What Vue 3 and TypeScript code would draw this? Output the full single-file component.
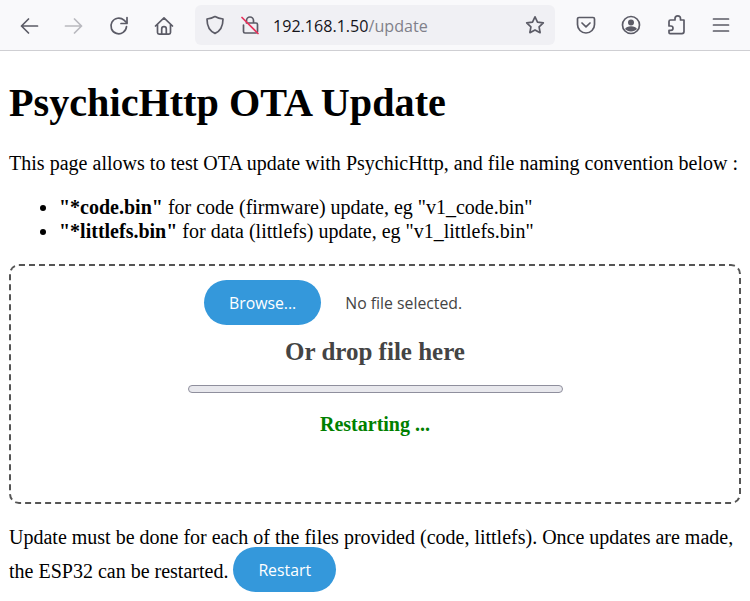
<script setup lang="ts">
const rules: { name: string; text: string }[] = [
  { name: '"*code.bin"', text: ' for code (firmware) update, eg "v1_code.bin"' },
  { name: '"*littlefs.bin"', text: ' for data (littlefs) update, eg "v1_littlefs.bin"' },
]
</script>

<template>
  <div class="window">
    <header class="toolbar">
      <nav class="group nav">
        <svg class="icon" viewBox="0 0 20 20"><path d="M18.500 10H2.500M9.500 3 2.500 10l7 7" /></svg>
        <svg class="icon faint" viewBox="0 0 20 20"><path d="M1.500 10h16M10.500 3l7 7-7 7" /></svg>
        <svg class="icon" viewBox="0 0 20 20"><path d="M17.500 10.500A7.800 7.800 0 1 1 15 4.200L17.600 6.600" /><path d="M18 1.500v6h-6" /></svg>
        <svg class="icon" viewBox="0 0 20 20"><path d="M1.500 10 10 1.800 18.500 10M3.500 8.500v8a1.600 1.600 0 0 0 1.600 1.600h9.800a1.600 1.600 0 0 0 1.600-1.600v-8" /><path d="M7.700 18v-5a2.300 2.300 0 0 1 4.600 0v5" /></svg>
      </nav>
      <div class="urlbar">
        <svg class="icon" viewBox="0 0 20 20"><path d="M10 1.600c2.500 1.400 5 2.100 8 2.400 0 7-2 11.800-8 14.400C4 15.800 2 11 2 4c3-.3 5.500-1 8-2.400z" /></svg>
        <svg class="icon lock" viewBox="0 0 20 20">
          <path d="M6.500 8V5.500a3.500 3.500 0 0 1 7 0V8M3.500 10v6.500a1.500 1.500 0 0 0 1.500 1.500h11a1.500 1.500 0 0 0 1.500-1.500V9.500A1.500 1.500 0 0 0 16 8H6.500" />
          <path class="slash" d="M2 2.500 18 18.500" />
        </svg>
        <span class="address">192.168.1.50<span class="path">/update</span></span>
        <svg class="icon star" viewBox="0 0 20 20"><path d="M10 1.800l2.500 5.300 5.800.8-4.200 4 1 5.800-5.100-2.800-5.100 2.800 1-5.800-4.200-4 5.800-.8z" /></svg>
      </div>
      <div class="group tools">
        <svg class="icon" viewBox="0 0 20 20"><path d="M3 2.500h14a1.500 1.500 0 0 1 1.500 1.500v5.500a8.500 8.500 0 0 1-17 0V4A1.500 1.500 0 0 1 3 2.500z" /><path d="M6 8l4 3.800L14 8" /></svg>
        <svg class="icon" viewBox="0 0 20 20"><circle cx="10" cy="10" r="8.500" /><circle class="fill" cx="10" cy="7.500" r="3" /><path class="fill" d="M4 14c1-2 3.200-2.800 6-2.800s5 .8 6 2.800c-1.500 1.600-3.500 2.500-6 2.500S5.500 15.600 4 14z" /></svg>
        <svg class="icon" viewBox="0 0 20 20"><path d="M8 5H3.500A1.500 1.500 0 0 0 2 6.500V11h1.800a2.200 2.200 0 0 1 0 4.400H2v2.200c0 .6.400 1 1 1h12a2 2 0 0 0 2-2V5h-3.500V3.700a2.700 2.700 0 0 0-5.500 0V5z" transform="translate(1 0)" /></svg>
        <svg class="icon" viewBox="0 0 20 20"><path d="M2.500 4h15M2.500 10h15M2.500 16h15" /></svg>
      </div>
    </header>

    <main class="page">
      <h1>PsychicHttp OTA Update</h1>
      <p class="intro">This page allows to test OTA update with PsychicHttp, and file naming convention below :</p>
      <ul>
        <li v-for="rule in rules" :key="rule.name"><b>{{ rule.name }}</b>{{ rule.text }}</li>
      </ul>

      <section class="dropzone">
        <div class="picker">
          <button class="pill" type="button">Browse...</button>
          <span class="filename">No file selected.</span>
        </div>
        <h3>Or drop file here</h3>
        <div class="progress"></div>
        <p class="status">Restarting ...</p>
      </section>

      <p class="footer">
        Update must be done for each of the files provided (code, littlefs). Once updates are made, the ESP32 can be restarted.
        <button class="pill restart" type="button">Restart</button>
      </p>
    </main>
  </div>
</template>

<style>
html, body { margin: 0; background: #fff; overflow: hidden; }
</style>

<style scoped>
.window { width: 750px; height: 601px; overflow: hidden; font-family: "Liberation Serif", serif; color: #000; }
.toolbar {
  box-sizing: border-box; height: 51px; display: flex; align-items: center;
  padding: 0 19px; background: #f9f9fb; border-bottom: 1px solid #cfcfd3;
}
.group { display: flex; align-items: center; margin-top: 1px; }
.nav { gap: 25px; width: 176px; }
.tools { gap: 25px; margin-left: 21px; margin-top: 0; }
.icon { width: 20px; height: 20px; flex: none; fill: none; stroke: #5b5b66; stroke-width: 1.7; stroke-linejoin: round; stroke-linecap: round; }
.faint { opacity: .4; }
.fill { fill: #5b5b66; stroke: none; }
.slash { stroke: #e8315b; }
.urlbar {
  box-sizing: border-box; width: 360px; height: 40px; display: flex; align-items: center;
  gap: 15px; padding: 0 10px; background: #f0f0f4; border-radius: 6px;
}
.lock { margin-right: -2px; }
.address { flex: 1; padding-top: 1px; font: 16.1px "Open Sans", sans-serif; color: #15141a; white-space: nowrap; }
.path { color: #80808a; }
.page { padding: 0 9px; font-size: 20px; line-height: 23px; }
h1 { margin: 29px 0 26px; font-size: 40.2px; line-height: 46px; font-weight: bold; }
.intro { margin: 26px 0 20px; word-spacing: .1px; }
ul { margin: 20px 0; padding-left: 50px; line-height: 24px; }
.dropzone {
  box-sizing: border-box; height: 240px; margin-top: 21px; padding-top: 14px;
  border: 2px dashed #555; border-radius: 10px; text-align: center;
}
.picker { display: flex; align-items: center; margin-left: 193px; }
.pill {
  height: 45px; padding: 0 25px; border: 0; border-radius: 23px; background: #3498db; color: #fff;
  font: 15.8px "Open Sans", sans-serif;
}
.filename { margin-left: 24px; font: 15.8px "Open Sans", sans-serif; color: #444; }
h3 { margin: 12px 0 0; font-size: 25px; line-height: 29px; color: #444; }
.progress {
  box-sizing: border-box; width: 375px; height: 8px; margin: 19px 0 0 177px;
  background: #e8e8ed; border: 1px solid #8f8f9d; border-radius: 4px;
}
.status { margin: 20px 0 0; font-weight: bold; color: green; }
.footer { margin: 16px 0 0; line-height: 34px; }
.restart { vertical-align: middle; margin: -10px 0 -3px; }
</style>
